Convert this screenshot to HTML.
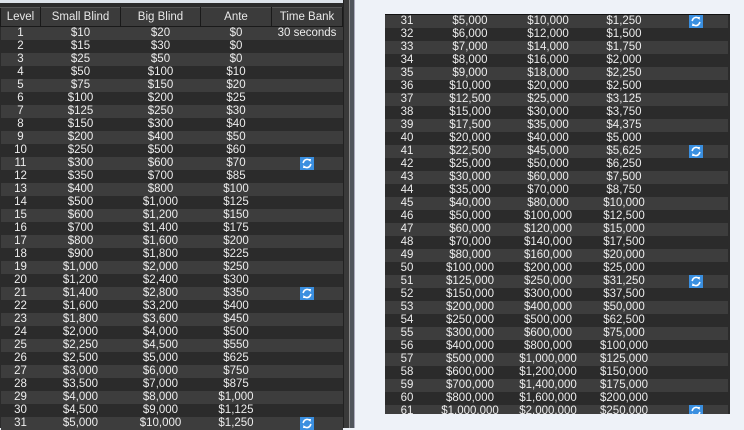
<!DOCTYPE html>
<html><head><meta charset="utf-8"><style>
*{margin:0;padding:0;box-sizing:border-box}
body{width:744px;height:428px;overflow:hidden;background:#eef2f8;position:relative;font-family:"Liberation Sans",sans-serif;font-size:11.5px;color:#ececec}
#left{position:absolute;left:0;top:0;width:343px;height:428px;background:#2b2b2b;border-top:3px solid #dde3ea}
#lstrip{position:absolute;left:343px;top:0;width:6px;height:428px;background:#3a3a3a;border-left:1px solid #222}
#div{position:absolute;left:349px;top:0;width:6px;height:428px;background:#50555c;border-left:1px solid #888;border-right:1px solid #aab}
table{border-collapse:collapse;table-layout:fixed}
td,th{height:13px;line-height:13px;text-align:center;white-space:nowrap;padding:0;overflow:hidden}
th{font-weight:normal;height:18px;line-height:18px;background:#3b3b3b;border:1px solid #1a1a1a;border-top-color:#555;color:#e8e8e8}
tr:nth-child(odd) td{background:#3d3d3d}
tr:nth-child(even) td{background:#2b2b2b}
#lt{position:absolute;left:0;top:4px;width:342px}
#right{position:absolute;left:385px;top:14px;width:345px;height:400px;background:#2b2b2b;border-top:1px solid #111;overflow:hidden}
#rt{width:343px}
.i{display:inline-block;width:14px;height:13px;background:#3a8fe0;vertical-align:top}
.i svg{display:block}
</style></head><body>
<svg width="0" height="0" style="position:absolute"><defs><symbol id="ic" viewBox="0 0 14 13"><path d="M10 3.5 A4 4 0 0 0 4 4 L3 6" fill="none" stroke="#fff" stroke-width="1.6"/><path d="M4 9.5 A4 4 0 0 0 10 9 L11 7" fill="none" stroke="#fff" stroke-width="1.6"/><path d="M8 2 L11 2 L10.5 5 Z" fill="#fff"/><path d="M6 11 L3 11 L3.5 8 Z" fill="#fff"/></symbol></defs></svg>
<div id="left">
<table id="lt"><colgroup><col style="width:40px"><col style="width:80px"><col style="width:80px"><col style="width:71px"><col style="width:71px"></colgroup>
<thead><tr><th>Level</th><th>Small Blind</th><th>Big Blind</th><th>Ante</th><th>Time Bank</th></tr></thead>
<tbody>
<tr><td>1</td><td>$10</td><td>$20</td><td>$0</td><td>30 seconds</td></tr>
<tr><td>2</td><td>$15</td><td>$30</td><td>$0</td><td></td></tr>
<tr><td>3</td><td>$25</td><td>$50</td><td>$0</td><td></td></tr>
<tr><td>4</td><td>$50</td><td>$100</td><td>$10</td><td></td></tr>
<tr><td>5</td><td>$75</td><td>$150</td><td>$20</td><td></td></tr>
<tr><td>6</td><td>$100</td><td>$200</td><td>$25</td><td></td></tr>
<tr><td>7</td><td>$125</td><td>$250</td><td>$30</td><td></td></tr>
<tr><td>8</td><td>$150</td><td>$300</td><td>$40</td><td></td></tr>
<tr><td>9</td><td>$200</td><td>$400</td><td>$50</td><td></td></tr>
<tr><td>10</td><td>$250</td><td>$500</td><td>$60</td><td></td></tr>
<tr><td>11</td><td>$300</td><td>$600</td><td>$70</td><td><span class="i"><svg width="14" height="13"><use href="#ic"/></svg></span></td></tr>
<tr><td>12</td><td>$350</td><td>$700</td><td>$85</td><td></td></tr>
<tr><td>13</td><td>$400</td><td>$800</td><td>$100</td><td></td></tr>
<tr><td>14</td><td>$500</td><td>$1,000</td><td>$125</td><td></td></tr>
<tr><td>15</td><td>$600</td><td>$1,200</td><td>$150</td><td></td></tr>
<tr><td>16</td><td>$700</td><td>$1,400</td><td>$175</td><td></td></tr>
<tr><td>17</td><td>$800</td><td>$1,600</td><td>$200</td><td></td></tr>
<tr><td>18</td><td>$900</td><td>$1,800</td><td>$225</td><td></td></tr>
<tr><td>19</td><td>$1,000</td><td>$2,000</td><td>$250</td><td></td></tr>
<tr><td>20</td><td>$1,200</td><td>$2,400</td><td>$300</td><td></td></tr>
<tr><td>21</td><td>$1,400</td><td>$2,800</td><td>$350</td><td><span class="i"><svg width="14" height="13"><use href="#ic"/></svg></span></td></tr>
<tr><td>22</td><td>$1,600</td><td>$3,200</td><td>$400</td><td></td></tr>
<tr><td>23</td><td>$1,800</td><td>$3,600</td><td>$450</td><td></td></tr>
<tr><td>24</td><td>$2,000</td><td>$4,000</td><td>$500</td><td></td></tr>
<tr><td>25</td><td>$2,250</td><td>$4,500</td><td>$550</td><td></td></tr>
<tr><td>26</td><td>$2,500</td><td>$5,000</td><td>$625</td><td></td></tr>
<tr><td>27</td><td>$3,000</td><td>$6,000</td><td>$750</td><td></td></tr>
<tr><td>28</td><td>$3,500</td><td>$7,000</td><td>$875</td><td></td></tr>
<tr><td>29</td><td>$4,000</td><td>$8,000</td><td>$1,000</td><td></td></tr>
<tr><td>30</td><td>$4,500</td><td>$9,000</td><td>$1,125</td><td></td></tr>
<tr><td>31</td><td>$5,000</td><td>$10,000</td><td>$1,250</td><td><span class="i"><svg width="14" height="13"><use href="#ic"/></svg></span></td></tr>
</tbody></table>
</div>
<div id="lstrip"></div>
<div id="div"></div>
<div id="right">
<table id="rt"><colgroup><col style="width:44px"><col style="width:82px"><col style="width:74px"><col style="width:78px"><col style="width:65px"></colgroup>
<tbody>
<tr><td>31</td><td>$5,000</td><td>$10,000</td><td>$1,250</td><td><span class="i"><svg width="14" height="13"><use href="#ic"/></svg></span></td></tr>
<tr><td>32</td><td>$6,000</td><td>$12,000</td><td>$1,500</td><td></td></tr>
<tr><td>33</td><td>$7,000</td><td>$14,000</td><td>$1,750</td><td></td></tr>
<tr><td>34</td><td>$8,000</td><td>$16,000</td><td>$2,000</td><td></td></tr>
<tr><td>35</td><td>$9,000</td><td>$18,000</td><td>$2,250</td><td></td></tr>
<tr><td>36</td><td>$10,000</td><td>$20,000</td><td>$2,500</td><td></td></tr>
<tr><td>37</td><td>$12,500</td><td>$25,000</td><td>$3,125</td><td></td></tr>
<tr><td>38</td><td>$15,000</td><td>$30,000</td><td>$3,750</td><td></td></tr>
<tr><td>39</td><td>$17,500</td><td>$35,000</td><td>$4,375</td><td></td></tr>
<tr><td>40</td><td>$20,000</td><td>$40,000</td><td>$5,000</td><td></td></tr>
<tr><td>41</td><td>$22,500</td><td>$45,000</td><td>$5,625</td><td><span class="i"><svg width="14" height="13"><use href="#ic"/></svg></span></td></tr>
<tr><td>42</td><td>$25,000</td><td>$50,000</td><td>$6,250</td><td></td></tr>
<tr><td>43</td><td>$30,000</td><td>$60,000</td><td>$7,500</td><td></td></tr>
<tr><td>44</td><td>$35,000</td><td>$70,000</td><td>$8,750</td><td></td></tr>
<tr><td>45</td><td>$40,000</td><td>$80,000</td><td>$10,000</td><td></td></tr>
<tr><td>46</td><td>$50,000</td><td>$100,000</td><td>$12,500</td><td></td></tr>
<tr><td>47</td><td>$60,000</td><td>$120,000</td><td>$15,000</td><td></td></tr>
<tr><td>48</td><td>$70,000</td><td>$140,000</td><td>$17,500</td><td></td></tr>
<tr><td>49</td><td>$80,000</td><td>$160,000</td><td>$20,000</td><td></td></tr>
<tr><td>50</td><td>$100,000</td><td>$200,000</td><td>$25,000</td><td></td></tr>
<tr><td>51</td><td>$125,000</td><td>$250,000</td><td>$31,250</td><td><span class="i"><svg width="14" height="13"><use href="#ic"/></svg></span></td></tr>
<tr><td>52</td><td>$150,000</td><td>$300,000</td><td>$37,500</td><td></td></tr>
<tr><td>53</td><td>$200,000</td><td>$400,000</td><td>$50,000</td><td></td></tr>
<tr><td>54</td><td>$250,000</td><td>$500,000</td><td>$62,500</td><td></td></tr>
<tr><td>55</td><td>$300,000</td><td>$600,000</td><td>$75,000</td><td></td></tr>
<tr><td>56</td><td>$400,000</td><td>$800,000</td><td>$100,000</td><td></td></tr>
<tr><td>57</td><td>$500,000</td><td>$1,000,000</td><td>$125,000</td><td></td></tr>
<tr><td>58</td><td>$600,000</td><td>$1,200,000</td><td>$150,000</td><td></td></tr>
<tr><td>59</td><td>$700,000</td><td>$1,400,000</td><td>$175,000</td><td></td></tr>
<tr><td>60</td><td>$800,000</td><td>$1,600,000</td><td>$200,000</td><td></td></tr>
<tr><td>61</td><td>$1,000,000</td><td>$2,000,000</td><td>$250,000</td><td><span class="i"><svg width="14" height="13"><use href="#ic"/></svg></span></td></tr>
</tbody></table>
</div>
</body></html>
